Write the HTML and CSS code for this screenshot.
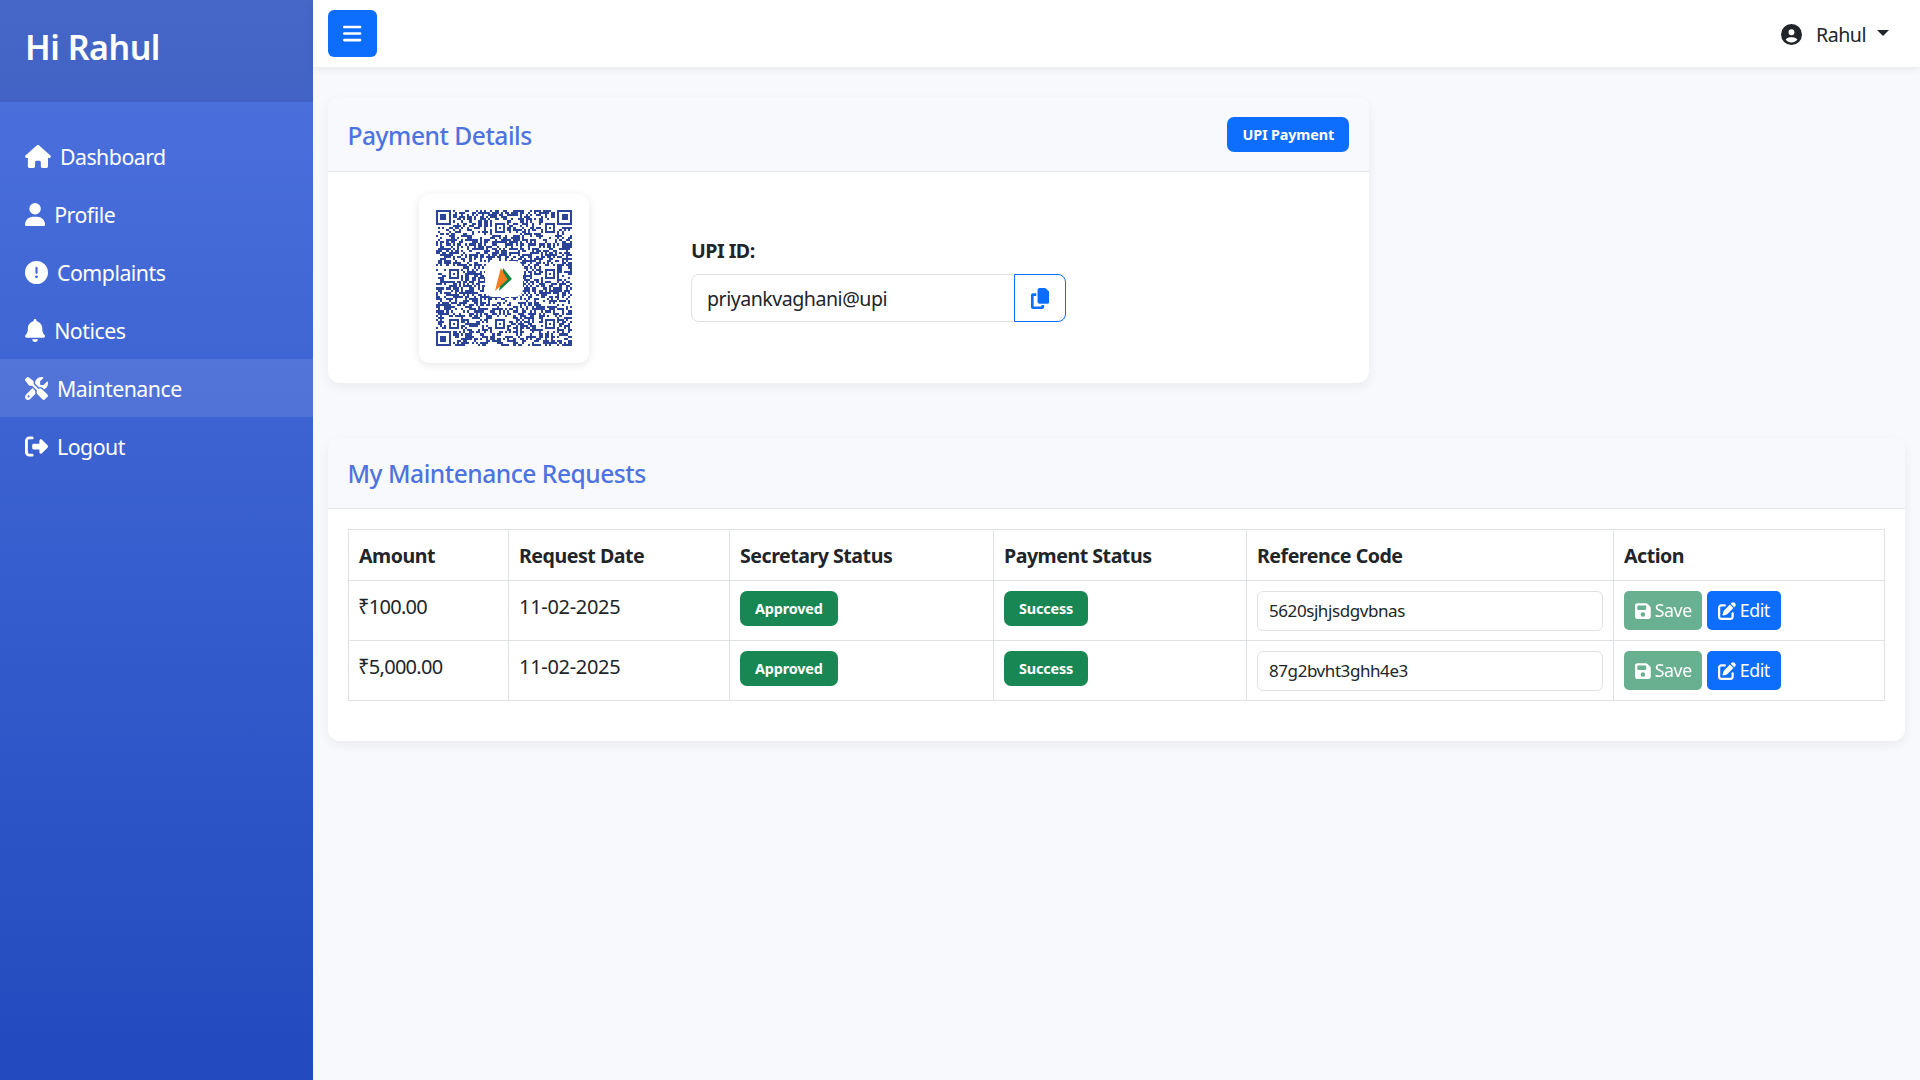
FILE: index.html
```html
<!DOCTYPE html>
<html lang="en">
<head>
<meta charset="utf-8">
<title>Maintenance</title>
<link rel="stylesheet" href="styles.css">
</head>
<body>
<div class="app">
  <aside class="sidebar">
    <div class="brand">Hi Rahul</div>
    <nav class="nav">
      <a class="nav-link"><svg class="ico" viewBox="0 0 576 512"><path d="M575.8 255.5c0 18-15 32.1-32 32.1h-32l.7 160.2c0 2.7-.2 5.4-.5 8.1V472c0 22.1-17.9 40-40 40H456c-1.1 0-2.2 0-3.3-.1c-1.4 .1-2.8 .1-4.2 .1H416 392c-22.1 0-40-17.9-40-40V448 384c0-17.7-14.3-32-32-32H256c-17.7 0-32 14.3-32 32v64 24c0 22.1-17.9 40-40 40H160 128.1c-1.5 0-3-.1-4.5-.2c-1.2 .1-2.4 .2-3.6 .2H104c-22.1 0-40-17.9-40-40V360c0-.9 0-1.9 .1-2.8V287.6H32c-18 0-32-14-32-32.1c0-9 3-17 10-24L266.4 8c7-7 15-8 22-8s15 2 21 7L564.8 231.5c8 7 12 15 11 24z"/></svg>Dashboard</a>
      <a class="nav-link"><svg class="ico" viewBox="0 0 448 512"><path d="M224 256A128 128 0 1 0 224 0a128 128 0 1 0 0 256zm-45.7 48C79.8 304 0 383.8 0 482.3C0 498.7 13.3 512 29.7 512H418.3c16.4 0 29.7-13.3 29.7-29.7C448 383.8 368.2 304 269.7 304H178.3z"/></svg>Profile</a>
      <a class="nav-link"><svg class="ico" viewBox="0 0 512 512"><path d="M256 512A256 256 0 1 0 256 0a256 256 0 1 0 0 512zm0-384c13.3 0 24 10.7 24 24V264c0 13.3-10.7 24-24 24s-24-10.7-24-24V152c0-13.3 10.7-24 24-24zM224 352a32 32 0 1 1 64 0 32 32 0 1 1 -64 0z"/></svg>Complaints</a>
      <a class="nav-link"><svg class="ico" viewBox="0 0 448 512"><path d="M224 0c-17.7 0-32 14.3-32 32V51.2C119 66 64 130.6 64 208v18.8c0 47-17.3 92.4-48.5 127.6l-7.4 8.3c-8.4 9.4-10.4 22.9-5.3 34.4S19.4 416 32 416H416c12.6 0 24-7.4 29.2-18.9s3.1-25-5.3-34.4l-7.4-8.3C401.3 319.2 384 273.9 384 226.8V208c0-77.4-55-142-128-156.8V32c0-17.7-14.3-32-32-32zm45.3 493.3c12-12 18.7-28.3 18.7-45.3H224 160c0 17 6.7 33.3 18.7 45.3s28.3 18.7 45.3 18.7s33.3-6.7 45.3-18.7z"/></svg>Notices</a>
      <a class="nav-link active"><svg class="ico" viewBox="0 0 512 512"><path d="M78.6 5C69.1-2.4 55.6-1.5 47 7L7 47c-8.5 8.5-9.4 22-2.1 31.6l80 104c4.5 5.9 11.6 9.4 19 9.4h54.1l109 109c-14.7 29-10 65.4 14.3 89.6l112 112c12.5 12.5 32.8 12.5 45.3 0l64-64c12.5-12.5 12.5-32.8 0-45.3l-112-112c-24.2-24.2-60.6-29-89.6-14.3l-109-109V104c0-7.5-3.5-14.5-9.4-19L78.6 5zM19.9 396.1C7.2 408.8 0 426.1 0 444.1C0 481.6 30.4 512 67.9 512c18 0 35.3-7.2 48-19.9L233.7 374.3c-7.8-20.9-9-43.6-3.6-65.1l-61.7-61.7L19.9 396.1zM512 144c0-10.5-1.1-20.7-3.2-30.5c-2.4-11.2-16.1-14.1-24.2-6l-63.9 63.9c-3 3-7.1 4.7-11.3 4.7H352c-8.8 0-16-7.2-16-16V102.6c0-4.2 1.7-8.3 4.7-11.3l63.9-63.9c8.1-8.1 5.2-21.8-6-24.2C388.7 1.1 378.5 0 368 0C288.5 0 224 64.5 224 144l0 .8 85.3 85.3c36-9.1 75.8 .5 104 28.7L429 274.5c49-23 83-72.8 83-130.5zM56 432a24 24 0 1 1 48 0 24 24 0 1 1 -48 0z"/></svg>Maintenance</a>
      <a class="nav-link"><svg class="ico" viewBox="0 0 512 512"><path d="M377.9 105.9L500.7 228.7c7.2 7.2 11.3 17.1 11.3 27.3s-4.1 20.1-11.3 27.3L377.9 406.1c-6.4 6.4-15 9.9-24 9.9c-18.7 0-33.9-15.2-33.9-33.9l0-62.1-128 0c-17.7 0-32-14.3-32-32l0-64c0-17.7 14.3-32 32-32l128 0 0-62.1c0-18.7 15.2-33.9 33.9-33.9c9 0 17.6 3.5 24 9.9zM160 96L96 96c-17.7 0-32 14.3-32 32l0 256c0 17.7 14.3 32 32 32l64 0c17.7 0 32 14.3 32 32s-14.3 32-32 32l-64 0c-53 0-96-43-96-96L0 128C0 75 43 32 96 32l64 0c17.7 0 32 14.3 32 32s-14.3 32-32 32z"/></svg>Logout</a>
    </nav>
  </aside>
  <div class="main">
    <header class="topbar">
      <button class="menu-btn"><svg class="ico-menu" viewBox="0 0 448 512"><path d="M0 96C0 78.3 14.3 64 32 64H416c17.7 0 32 14.3 32 32s-14.3 32-32 32H32C14.3 128 0 113.7 0 96zM0 256c0-17.7 14.3-32 32-32H416c17.7 0 32 14.3 32 32s-14.3 32-32 32H32c-17.7 0-32-14.3-32-32zM448 416c0 17.7-14.3 32-32 32H32c-17.7 0-32-14.3-32-32s14.3-32 32-32H416c17.7 0 32 14.3 32 32z"/></svg></button>
      <div class="user"><svg class="ico-user" viewBox="0 0 512 512"><path d="M399 384.2C376.9 345.8 335.4 320 288 320H224c-47.4 0-88.9 25.8-111 64.2c35.2 39.2 86.2 63.8 143 63.8s107.8-24.7 143-63.8zM0 256a256 256 0 1 1 512 0A256 256 0 1 1 0 256zm256 16a72 72 0 1 0 0-144 72 72 0 1 0 0 144z"/></svg><span>Rahul</span><i class="caret"></i></div>
    </header>
    <main class="content">
      <section class="card card-pay">
        <div class="card-head head-pay">
          <h2 class="card-title">Payment Details</h2>
          <span class="badge badge-blue">UPI Payment</span>
        </div>
        <div class="pay-body">
          <div class="qr-card">
            <svg class="qr" viewBox="0 0 65 65" shape-rendering="crispEdges"><path id="qr-modules" fill="#2b4497" d=""/></svg>
            <div class="qr-logo"><svg class="bhim" viewBox="0 0 20 28"><path fill="#13843f" d="M9 1l10 12.5L4.500 27z"/><path fill="#f47b20" d="M6.500 1L14 14 0 27z"/></svg></div>
          </div>
          <div class="upi">
            <label class="upi-label">UPI ID:</label>
            <div class="upi-group">
              <input class="upi-input" type="text" value="priyankvaghani@upi">
              <button class="copy-btn"><svg class="ico-copy" viewBox="0 0 448 512"><path d="M208 0H332.100c12.700 0 24.900 5.100 33.900 14.100l67.900 67.900c9 9 14.100 21.200 14.100 33.900V336c0 26.500-21.500 48-48 48H208c-26.500 0-48-21.500-48-48V48c0-26.500 21.500-48 48-48zM48 128h80v64H64V448H256V416h64v48c0 26.500-21.500 48-48 48H48c-26.500 0-48-21.500-48-48V176c0-26.500 21.500-48 48-48z"/></svg></button>
            </div>
          </div>
        </div>
      </section>
      <section class="card card-req">
        <div class="card-head head-req">
          <h2 class="card-title">My Maintenance Requests</h2>
        </div>
        <div class="req-body">
          <table class="table">
            <colgroup><col class="c1"><col class="c2"><col class="c3"><col class="c4"><col class="c5"><col class="c6"></colgroup>
            <thead><tr><th>Amount</th><th>Request Date</th><th>Secretary Status</th><th>Payment Status</th><th>Reference Code</th><th>Action</th></tr></thead>
            <tbody>
              <tr>
                <td class="amount">₹100.00</td><td>11-02-2025</td>
                <td><span class="badge badge-green">Approved</span></td>
                <td><span class="badge badge-green">Success</span></td>
                <td><input class="ref-input" type="text" value="5620sjhjsdgvbnas"></td>
                <td><div class="actions"><button class="btn btn-save"><svg class="ico-btn" viewBox="0 0 448 512"><path d="M64 32C28.700 32 0 60.700 0 96V416c0 35.300 28.700 64 64 64H384c35.300 0 64-28.700 64-64V173.300c0-17-6.700-33.300-18.700-45.300L352 50.700C340 38.700 323.700 32 306.700 32H64zm0 96c0-17.700 14.300-32 32-32H288c17.700 0 32 14.300 32 32v64c0 17.700-14.300 32-32 32H96c-17.700 0-32-14.300-32-32V128zM224 288a64 64 0 1 1 0 128 64 64 0 1 1 0-128z"/></svg>Save</button><button class="btn btn-edit"><svg class="ico-btn" viewBox="0 0 512 512"><path d="M471.600 21.700c-21.900-21.900-57.300-21.900-79.200 0L362.300 51.700l97.900 97.900 30.100-30.100c21.900-21.900 21.900-57.300 0-79.200L471.600 21.700zm-299.200 220c-6.100 6.100-10.800 13.600-13.500 21.900l-29.600 88.800c-2.900 8.600-.6 18.100 5.800 24.600s15.900 8.700 24.600 5.800l88.800-29.600c8.200-2.700 15.700-7.400 21.900-13.500L437.700 172.300 339.700 74.300 172.400 241.700zM96 64C43 64 0 107 0 160V416c0 53 43 96 96 96H352c53 0 96-43 96-96V320c0-17.700-14.300-32-32-32s-32 14.300-32 32v96c0 17.700-14.300 32-32 32H96c-17.700 0-32-14.300-32-32V160c0-17.700 14.300-32 32-32h96c17.700 0 32-14.300 32-32s-14.300-32-32-32H96z"/></svg>Edit</button></div></td>
              </tr>
              <tr>
                <td class="amount">₹5,000.00</td><td>11-02-2025</td>
                <td><span class="badge badge-green">Approved</span></td>
                <td><span class="badge badge-green">Success</span></td>
                <td><input class="ref-input" type="text" value="87g2bvht3ghh4e3"></td>
                <td><div class="actions"><button class="btn btn-save"><svg class="ico-btn" viewBox="0 0 448 512"><path d="M64 32C28.700 32 0 60.700 0 96V416c0 35.300 28.700 64 64 64H384c35.300 0 64-28.700 64-64V173.300c0-17-6.700-33.300-18.700-45.300L352 50.700C340 38.700 323.700 32 306.700 32H64zm0 96c0-17.700 14.300-32 32-32H288c17.700 0 32 14.300 32 32v64c0 17.700-14.300 32-32 32H96c-17.700 0-32-14.300-32-32V128zM224 288a64 64 0 1 1 0 128 64 64 0 1 1 0-128z"/></svg>Save</button><button class="btn btn-edit"><svg class="ico-btn" viewBox="0 0 512 512"><path d="M471.600 21.700c-21.900-21.900-57.300-21.900-79.200 0L362.300 51.700l97.900 97.900 30.100-30.100c21.900-21.900 21.900-57.300 0-79.200L471.600 21.700zm-299.200 220c-6.100 6.100-10.800 13.600-13.500 21.900l-29.600 88.800c-2.900 8.600-.6 18.100 5.800 24.600s15.900 8.700 24.600 5.800l88.800-29.600c8.200-2.700 15.700-7.400 21.900-13.500L437.700 172.300 339.700 74.300 172.400 241.700zM96 64C43 64 0 107 0 160V416c0 53 43 96 96 96H352c53 0 96-43 96-96V320c0-17.700-14.300-32-32-32s-32 14.300-32 32v96c0 17.700-14.300 32-32 32H96c-17.700 0-32-14.300-32-32V160c0-17.700 14.300-32 32-32h96c17.700 0 32-14.300 32-32s-14.300-32-32-32H96z"/></svg>Edit</button></div></td>
              </tr>
            </tbody>
          </table>
        </div>
      </section>
    </main>
  </div>
</div>
<script src="qr.js"></script>
</body>
</html>
```
FILE: styles.css
```css
* { box-sizing: border-box; }
html, body { margin: 0; height: 100%; }
body {
  font-family: "Noto Sans", "Open Sans", sans-serif;
  background: #f8f9fc;
  color: #212529;
  font-size: 19.6px;
  letter-spacing: -0.025em;
}
.app { display: flex; height: 100vh; overflow: hidden; }

.sidebar {
  width: 313px;
  flex: none;
  background: linear-gradient(180deg, #4e73df 0%, #224abe 100%);
  color: #fff;
}
.brand {
  height: 102px;
  padding: 25px 25px 0;
  background: rgba(0, 0, 0, .1);
  font-size: 34px;
  font-weight: 600;
  line-height: 44px;
}
.nav { padding-top: 25px; display: flex; flex-direction: column; }
.nav-link {
  height: 58px;
  padding: 1px 0 0 25px;
  display: flex;
  align-items: center;
  gap: 9px;
  font-size: 21.300px;
  color: #fff;
}
.nav-link.active { background: rgba(255, 255, 255, .1); }
.ico { height: 23px; width: auto; fill: #fff; flex: none; }

.main { flex: 1; min-width: 0; }
.topbar {
  height: 67px;
  background: #fff;
  box-shadow: 0 2px 8px rgba(0, 0, 0, .08);
  padding: 10px 15px;
  display: flex;
  align-items: flex-start;
  justify-content: space-between;
}
.menu-btn {
  width: 49px;
  height: 47px;
  background: #0d6efd;
  border: 0;
  border-radius: 6px;
  padding: 0;
  display: flex;
  align-items: center;
  justify-content: center;
}
.ico-menu { height: 21px; fill: #fff; }
.user {
  display: flex;
  align-items: center;
  height: 47px;
  margin-right: 16px;
  padding-top: 2px;
}
.ico-user { height: 21px; fill: #212529; margin-right: 14px; }
.caret {
  margin-left: 11px;
  border-top: 6px solid #212529;
  border-left: 6px solid transparent;
  border-right: 6px solid transparent;
  margin-top: -4px;
}

.content { padding: 30px 15px; }
.card {
  background: #fff;
  border-radius: 12px;
  box-shadow: 0 4px 12px rgba(0, 0, 0, .06);
  overflow: hidden;
}
.card-pay { width: 1041px; height: 286px; }
.card-req { margin-top: 55px; height: 303px; }
.card-head {
  background: #f8f9fc;
  border-bottom: 1px solid #e3e6f0;
  padding: 0 20px 0 19.500px;
  display: flex;
  align-items: center;
  justify-content: space-between;
}
.head-pay { height: 75px; }
.head-req { height: 71px; }
.card-title {
  margin: 0;
  font-size: 24.600px;
  font-weight: 500;
  color: #4e73df;
}
.head-pay .card-title { padding-top: 2px; }
.badge {
  display: inline-flex;
  align-items: center;
  justify-content: center;
  height: 35px;
  border-radius: 7px;
  color: #fff;
  font-size: 14.400px;
  font-weight: 700;
  letter-spacing: -0.01em;
  padding: 0 15px;
}
.head-pay .badge { margin-top: 1px; }
.badge-blue { background: #0d6efd; }
.badge-green { background: #198754; }

.pay-body { display: flex; align-items: flex-start; }
.qr-card {
  position: relative;
  width: 170px;
  height: 169px;
  margin: 22px 0 0 91px;
  padding: 16px 17px;
  background: #fff;
  border-radius: 10px;
  box-shadow: 0 2px 8px rgba(0, 0, 0, .1);
  flex: none;
}
.qr { display: block; width: 136px; height: 136px; filter: blur(.45px); }
.qr-logo {
  position: absolute;
  left: 66px;
  top: 67px;
  width: 38px;
  height: 36px;
  background: #fff;
  border-radius: 8px;
  display: flex;
  align-items: center;
  justify-content: center;
}
.bhim { height: 25px; }
.upi { margin: 65px 0 0 102px; }
.upi-label { display: block; font-weight: 700; line-height: 26px; margin: 1px 0 10px; }
.upi-group { display: flex; height: 48px; }
.upi-input {
  width: 324px;
  border: 1px solid #dee2e6;
  border-radius: 8px 0 0 8px;
  padding: 0 15px;
  font: inherit;
  letter-spacing: inherit;
  color: #212529;
  background: #fff;
  outline: 0;
}
.copy-btn {
  width: 52px;
  margin-left: -1px;
  background: #fff;
  border: 1px solid #0d6efd;
  border-radius: 0 8px 8px 0;
  padding: 0;
  display: flex;
  align-items: center;
  justify-content: center;
}
.ico-copy { height: 21px; fill: #0d6efd; }

.req-body { padding: 20px; }
.table { width: 100%; table-layout: fixed; border-collapse: collapse; }
.c1 { width: 160px; }
.c2 { width: 221px; }
.c3 { width: 264px; }
.c4 { width: 253px; }
.c5 { width: 367px; }
.table th, .table td {
  border: 1px solid #dee2e6;
  padding: 0 10px;
  text-align: left;
  vertical-align: top;
}
.table th { height: 51px; font-weight: 700; vertical-align: middle; padding-top: 1px; }
.table td {
  height: 60px;
  padding-top: 13px;
  line-height: 25px;
  font-size: 20px;
  letter-spacing: -0.015em;
}
.table td.amount { letter-spacing: -0.035em; padding-left: 9px; }
.table td:nth-child(n+3) { padding-top: 10px; }
.ref-input {
  display: block;
  width: 100%;
  height: 40px;
  border: 1px solid #dee2e6;
  border-radius: 6px;
  padding: 0 11px 2px;
  font: inherit;
  font-size: 17px;
  letter-spacing: -0.025em;
  color: #212529;
  outline: 0;
}
.actions { display: flex; gap: 5px; }
.btn {
  height: 39px;
  border: 0;
  border-radius: 5px;
  padding: 0 11px;
  display: flex;
  align-items: center;
  gap: 4px;
  color: #fff;
  font: inherit;
  font-size: 17.800px;
  letter-spacing: -0.025em;
}
.btn-save { background: #198754; opacity: .65; padding: 0 10px 0 11px; }
.btn-edit { background: #0d6efd; }
.ico-btn { height: 18px; fill: #fff; }
```
FILE: qr.js
```js
// Draws the UPI QR modules from a fixed seed.
(function () {
  var n = 65, s = 20250211, grid = [], r, c;
  function rnd() { s = (s * 1664525 + 1013904223) >>> 0; return (s >>> 16) / 65536; }
  for (r = 0; r < n; r++) { grid[r] = []; for (c = 0; c < n; c++) grid[r][c] = rnd() < 0.5 ? 1 : 0; }
  function finder(x, y, size) {
    for (var j = -1; j <= size; j++) for (var i = -1; i <= size; i++) {
      if (y + j < 0 || x + i < 0 || y + j >= n || x + i >= n) continue;
      var ring = j === -1 || i === -1 || j === size || i === size;
      var edge = j === 0 || i === 0 || j === size - 1 || i === size - 1;
      var core = size === 7 ? (i >= 2 && i <= 4 && j >= 2 && j <= 4) : (i === 2 && j === 2);
      grid[y + j][x + i] = ring ? 0 : (edge || core) ? 1 : 0;
    }
  }
  finder(0, 0, 7); finder(n - 7, 0, 7); finder(0, n - 7, 7);
  [[28, 6], [6, 28], [52, 6], [6, 52], [28, 52], [52, 28], [52, 52]].forEach(function (p) { finder(p[0], p[1], 5); });
  var d = "";
  for (r = 0; r < n; r++) for (c = 0; c < n; c++) if (grid[r][c]) d += "M" + c + " " + r + "h1v1h-1z";
  document.getElementById("qr-modules").setAttribute("d", d);
})();
```
